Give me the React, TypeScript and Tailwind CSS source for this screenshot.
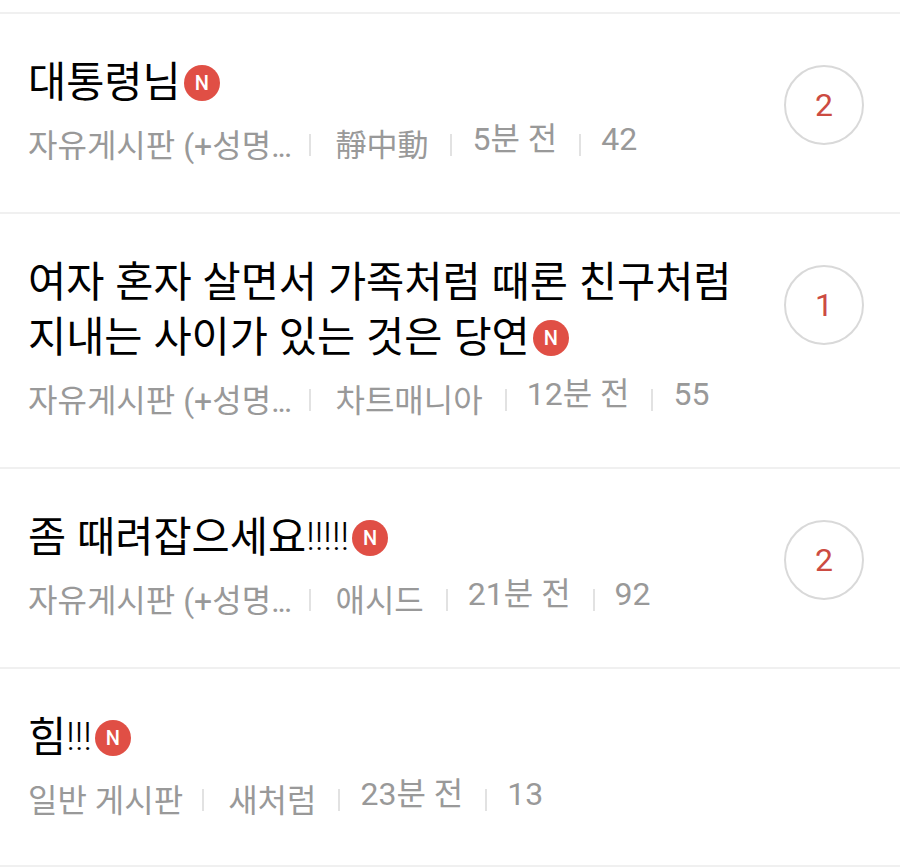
import React from 'react';

type Post = {
  title: string[];
  bangs?: string;
  board: string;
  dots?: boolean;
  author: string;
  authorClass?: string;
  time: string;
  views: string;
  comments?: string;
  height: string;
};

const posts: Post[] = [
  { title: ['대통령님'], board: '자유게시판 (+성명', dots: true, author: '靜中動', authorClass: 'text-[31px]', time: '5분 전', views: '42', comments: '2', height: 'h-[200px]' },
  { title: ['여자 혼자 살면서 가족처럼 때론 친구처럼', '지내는 사이가 있는 것은 당연'], board: '자유게시판 (+성명', dots: true, author: '차트매니아', time: '12분 전', views: '55', comments: '1', height: 'h-[255px]' },
  { title: ['좀 때려잡으세요'], bangs: '!!!!!', board: '자유게시판 (+성명', dots: true, author: '애시드', time: '21분 전', views: '92', comments: '2', height: 'h-[200px]' },
  { title: ['힘'], bangs: '!!!', board: '일반 게시판', author: '새처럼', time: '23분 전', views: '13', height: 'h-[198px]' },
];

const NewBadge = () => (
  <span className="ml-[3px] mt-[1px] inline-flex h-[36px] w-[36px] shrink-0 items-center justify-center rounded-full bg-[#e04f45] text-[20px] font-medium text-white">
    N
  </span>
);

const Row = ({ post }: { post: Post }) => (
  <div className={`flex ${post.height} items-start justify-between border-b-2 border-[#f0f0f0] pl-[28px] pr-[36px]`}>
    <div className="min-w-0 pt-[41px]">
      {post.title.map((line, i) => {
        const last = i === post.title.length - 1;
        return (
          <div key={i} className="flex h-[55px] items-center whitespace-pre text-[41.5px] leading-[55px] text-black [word-spacing:0.6px]">
            {line}
            {last && post.bangs && <span className="text-[38px] font-light">{post.bangs}</span>}
            {last && <NewBadge />}
          </div>
        );
      })}
      <div className="mt-[7px] flex items-start whitespace-nowrap text-[32px] leading-[44px] text-[#999999]">
        <span className="mt-[7px]">
          {post.board}
          {post.dots && <span className="tracking-[-2px]">...</span>}
        </span>
        <span className="ml-[19px] mr-[24px] mt-[17px] h-[22px] w-[2px] bg-[#e2e2e2]" />
        <span className={`mt-[7px] ${post.authorClass ?? ''}`}>{post.author}</span>
        <span className="ml-[22px] mr-[20px] mt-[17px] h-[22px] w-[2px] bg-[#e2e2e2]" />
        <span>{post.time}</span>
        <span className="ml-[22px] mr-[20px] mt-[17px] h-[22px] w-[2px] bg-[#e2e2e2]" />
        <span>{post.views}</span>
      </div>
    </div>
    {post.comments && (
      <div className="mt-[51px] flex h-[80px] w-[80px] shrink-0 items-center justify-center rounded-full border-2 border-[#d9d9d9] text-[32px] text-[#cc4b42]">
        {post.comments}
      </div>
    )}
  </div>
);

export default function App() {
  return (
    <div className="h-[867px] w-[900px] overflow-hidden bg-white pt-[12px] font-['Roboto','Noto_Sans_CJK_KR',sans-serif]">
      <div className="border-b-2 border-[#f0f0f0]" />
      {posts.map((post, i) => (
        <Row key={i} post={post} />
      ))}
    </div>
  );
}
